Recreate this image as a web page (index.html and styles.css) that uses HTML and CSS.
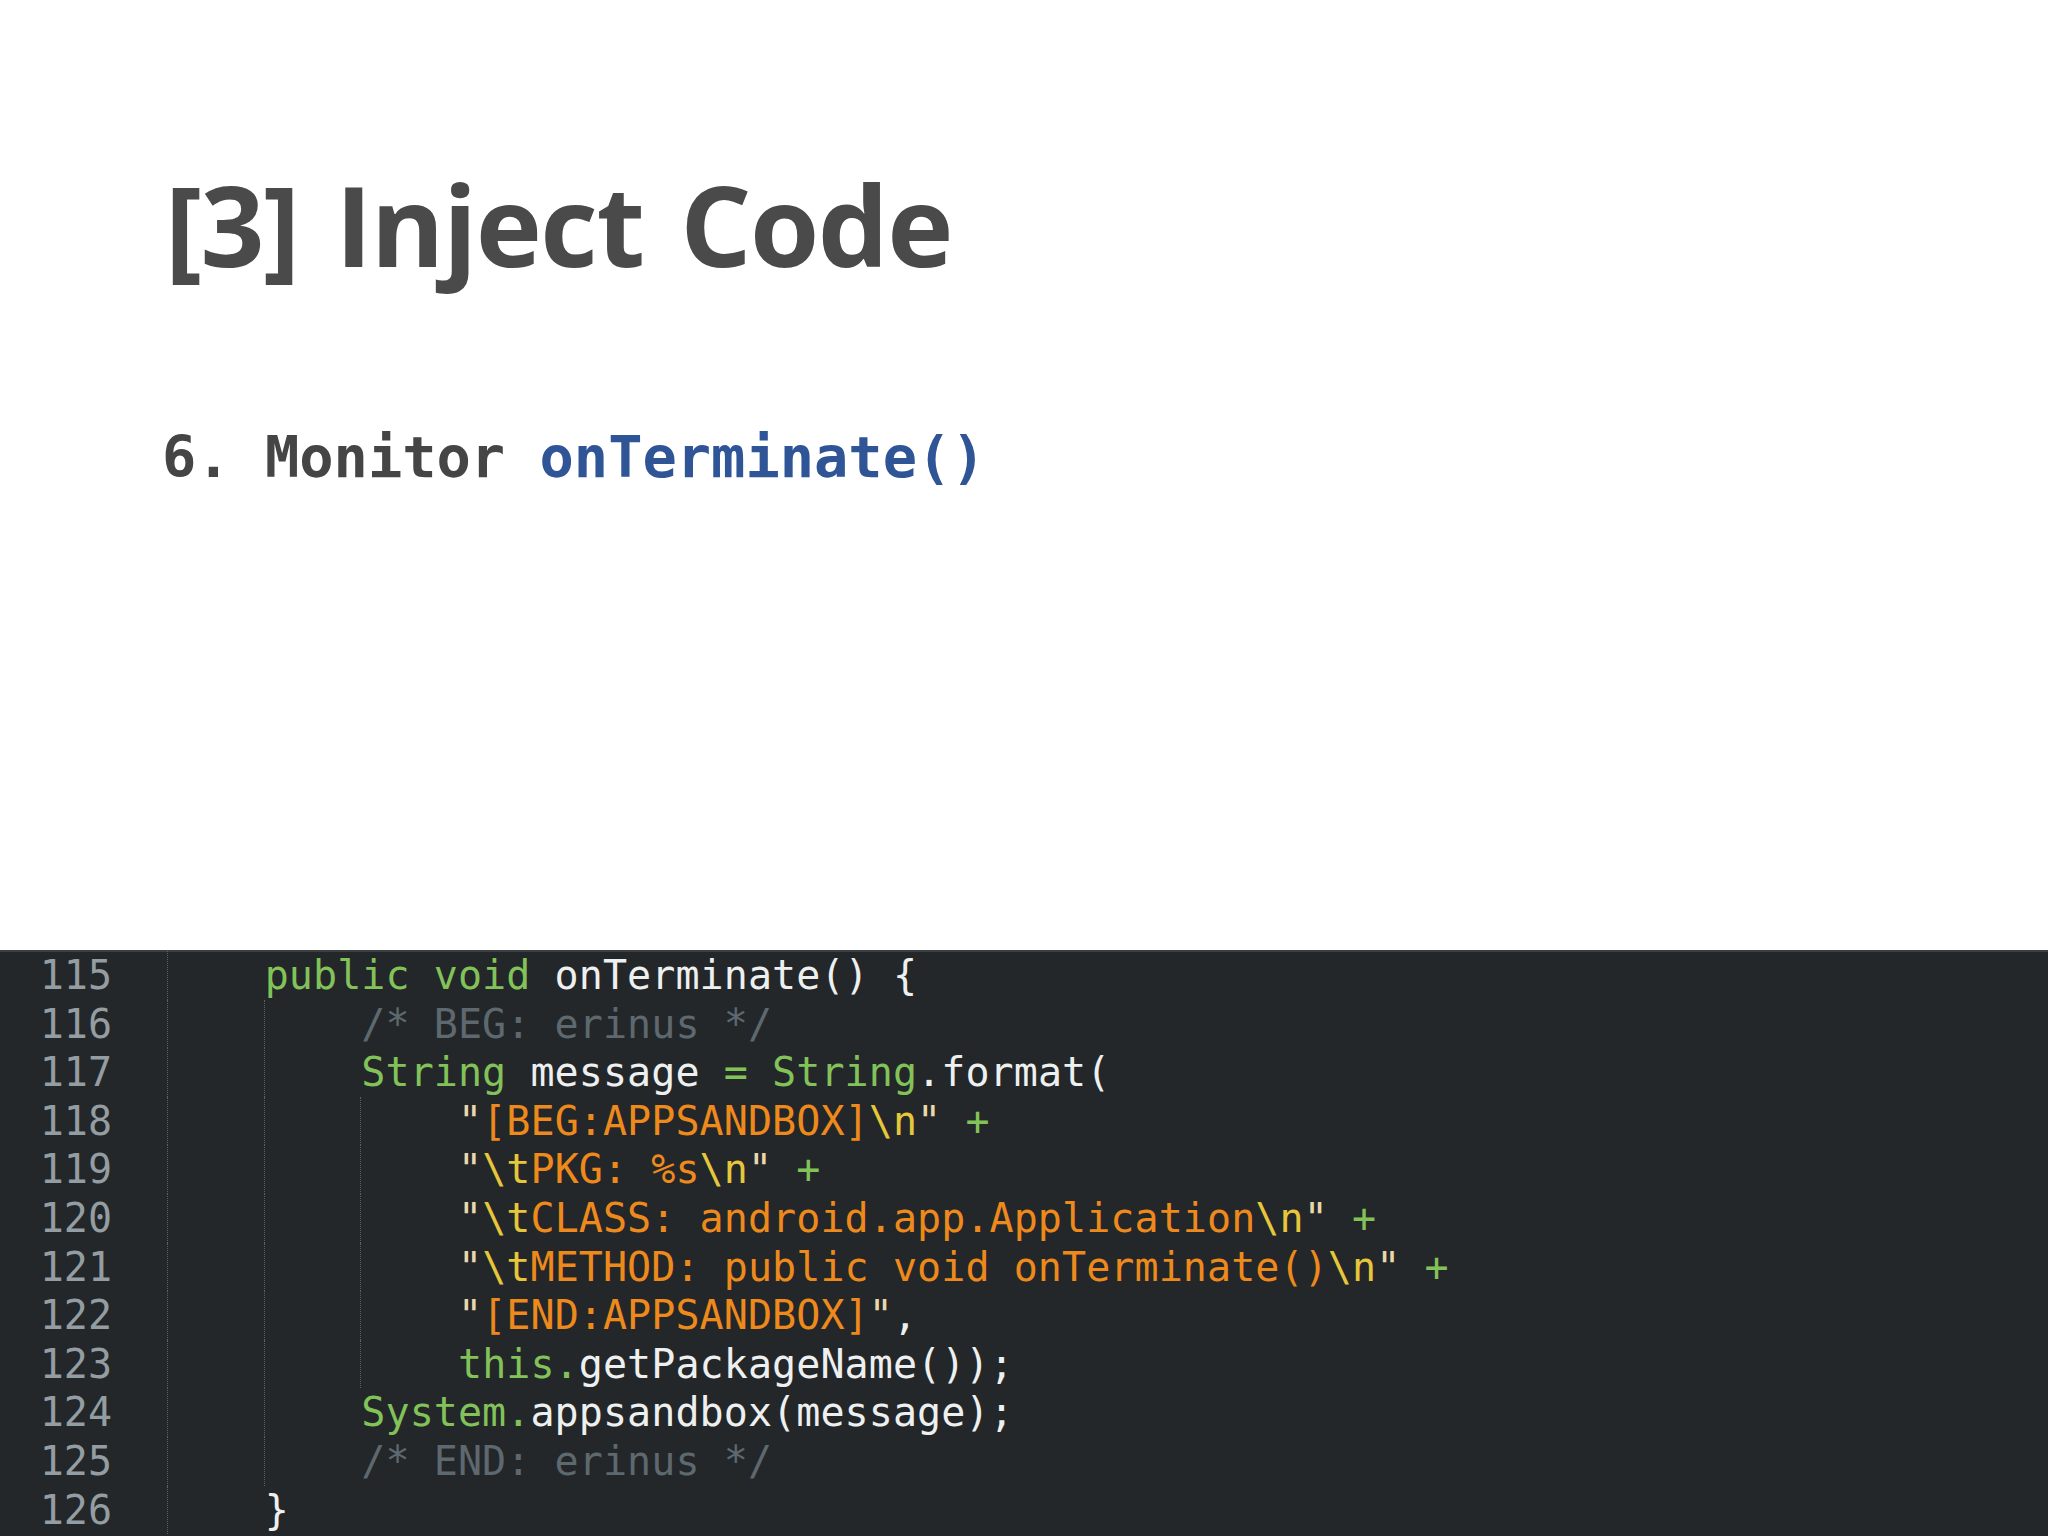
FILE: index.html
```html
<!DOCTYPE html>
<html lang="en">
<head>
<meta charset="utf-8">
<title>[3] Inject Code</title>
<link rel="stylesheet" href="styles.css">
</head>
<body>
<main class="slide">
  <header class="head">
    <h1 class="title">[3] Inject Code</h1>
    <p class="step">6. Monitor <span class="fn">onTerminate()</span></p>
  </header>
  <section class="editor">
    <pre class="gutter">115
116
117
118
119
120
121
122
123
124
125
126</pre>
<pre class="code"><span class="ind">    </span><span class="kw">public void</span> onTerminate() {
<span class="ind">    </span><span class="ind">    </span><span class="cm">/* BEG: erinus */</span>
<span class="ind">    </span><span class="ind">    </span><span class="kw">String</span> message <span class="kw">=</span> <span class="kw">String</span>.format(
<span class="ind">    </span><span class="ind">    </span><span class="ind">    </span><span class="q">"</span><span class="str">[BEG:APPSANDBOX]</span><span class="esc">\n</span><span class="q">"</span> <span class="kw">+</span>
<span class="ind">    </span><span class="ind">    </span><span class="ind">    </span><span class="q">"</span><span class="esc">\t</span><span class="str">PKG: %s</span><span class="esc">\n</span><span class="q">"</span> <span class="kw">+</span>
<span class="ind">    </span><span class="ind">    </span><span class="ind">    </span><span class="q">"</span><span class="esc">\t</span><span class="str">CLASS: android.app.Application</span><span class="esc">\n</span><span class="q">"</span> <span class="kw">+</span>
<span class="ind">    </span><span class="ind">    </span><span class="ind">    </span><span class="q">"</span><span class="esc">\t</span><span class="str">METHOD: public void onTerminate()</span><span class="esc">\n</span><span class="q">"</span> <span class="kw">+</span>
<span class="ind">    </span><span class="ind">    </span><span class="ind">    </span><span class="q">"</span><span class="str">[END:APPSANDBOX]</span><span class="q">"</span>,
<span class="ind">    </span><span class="ind">    </span><span class="ind">    </span><span class="kw">this.</span>getPackageName());
<span class="ind">    </span><span class="ind">    </span><span class="kw">System.</span>appsandbox(message);
<span class="ind">    </span><span class="ind">    </span><span class="cm">/* END: erinus */</span>
<span class="ind">    </span>}</pre>
  </section>
</main>
</body>
</html>
```

FILE: styles.css
```css
html, body {
  margin: 0;
  padding: 0;
  background: #ffffff;
}

.slide {
  width: 2048px;
  height: 1536px;
  display: flex;
  flex-direction: column;
  overflow: hidden;
}

.head {
  flex: 1 1 auto;
  padding: 168px 0 0 165px;
}

.title {
  margin: 0;
  font-family: "Open Sans", "Liberation Sans", sans-serif;
  font-weight: 700;
  font-size: 112px;
  line-height: 1;
  color: #4a4a4a;
  letter-spacing: -1.5px;
  word-spacing: 9px;
}

.step {
  margin: 149px 0 0 -3px;
  font-family: "DejaVu Sans Mono", "Liberation Mono", monospace;
  font-weight: 700;
  font-size: 57px;
  line-height: 1;
  color: #454545;
}

.fn {
  color: #2f5597;
}

.editor {
  flex: 0 0 auto;
  height: 584px;
  background: #23272a;
  border-top: 2px solid #3b3f42;
  display: flex;
}

.gutter,
.code {
  margin: 0;
  font-family: "DejaVu Sans Mono", "Liberation Mono", monospace;
  font-size: 40px;
  line-height: 48.6px;
  margin-top: -1px;
}

.gutter {
  width: 112px;
  padding-right: 56px;
  text-align: right;
  color: #939da2;
}

.code {
  color: #eef0f0;
  letter-spacing: 0.08px;
}

.ind {
  display: inline-block;
  border-left: 1px dotted #5a6064;
  margin-left: -1px;
  height: 48.6px;
  vertical-align: top;
}

.kw { color: #82c259; }
.cm { color: #5e686f; }
.str { color: #ee8a1c; }
.q { color: #e8d8ac; }
.esc { color: #e6c63a; }
```
